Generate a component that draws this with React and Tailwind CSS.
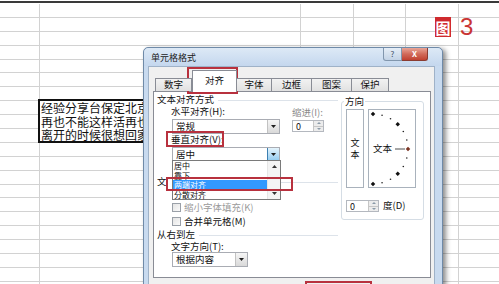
import React from "react"

const ROWS = Array.from({ length: 21 })

function ArrowBtn({ active }) {
  return (
    <div
      className={
        active
          ? "flex h-full w-[12px] items-center justify-center border-l border-[#3c7fb1] bg-gradient-to-b from-[#e5f4fc] to-[#8fcaf0]"
          : "flex h-full w-[12px] items-center justify-center border-l border-[#c2c2c2] bg-gradient-to-b from-[#f6f6f6] to-[#d9d9d9]"
      }
    >
      <svg width="5" height="3" viewBox="0 0 5 3">
        <path d="M0 0h5L2.5 3z" fill="#1e1e1e" />
      </svg>
    </div>
  )
}

function Select({ value, className, active }) {
  return (
    <div className={"flex h-[15px] items-center border border-[#a9acb3] bg-white " + className}>
      <span className="flex-1 pl-[3px] text-[9.5px] leading-none text-[#111]">{value}</span>
      <ArrowBtn active={active} />
    </div>
  )
}

function Spin({ className }) {
  return (
    <div className={"flex h-[12px] items-center border border-[#b4b8bf] bg-white " + className}>
      <span className="flex-1 pl-[3px] text-[9px] leading-none text-[#111]">0</span>
      <div className="flex h-full w-[10px] flex-col border-l border-[#c6c6c6] bg-[#ececec]">
        <div className="flex flex-1 items-center justify-center border-b border-[#c6c6c6]">
          <svg width="4" height="2" viewBox="0 0 4 2"><path d="M0 2h4L2 0z" fill="#8a9aa8" /></svg>
        </div>
        <div className="flex flex-1 items-center justify-center">
          <svg width="4" height="2" viewBox="0 0 4 2"><path d="M0 0h4L2 2z" fill="#8a9aa8" /></svg>
        </div>
      </div>
    </div>
  )
}

function Header({ text }) {
  return (
    <div className="flex h-[10px] items-center gap-[4px]">
      <span className="text-[9.5px] leading-none text-[#111]">{text}</span>
      <div className="h-px flex-1 bg-[#dde3ea]" />
    </div>
  )
}

function Check({ label, disabled }) {
  return (
    <div className="flex h-[11px] items-center gap-[3px] pl-[15px]">
      <div className="h-[9px] w-[9px] border border-[#9aa0a8] bg-gradient-to-br from-[#e4e4e4] to-[#fafafa]" />
      <span className={disabled ? "text-[9.5px] leading-none text-[#9a9a9a]" : "text-[9.5px] leading-none text-[#111]"}>
        {label}
      </span>
    </div>
  )
}

function Dial() {
  const dots = []
  for (let a = -90; a <= 90; a += 15) {
    const r = (a * Math.PI) / 180
    const x = 4 + 35 * Math.cos(r)
    const y = 39 + 35 * Math.sin(r)
    if (a % 45 === 0) {
      dots.push(
        <rect
          key={a}
          x={x - 1.6}
          y={y - 1.6}
          width="3.2"
          height="3.2"
          transform={`rotate(45 ${x} ${y})`}
          fill={a === 0 ? "#7a3322" : "#111"}
        />
      )
    } else {
      dots.push(<circle key={a} cx={x} cy={y} r="0.8" fill="#222" />)
    }
  }
  return (
    <div className="relative h-[79px] w-[48px] border border-[#a9b2bc] bg-white">
      <svg className="absolute left-0 top-0" width="48" height="79" viewBox="0 0 48 79">
        {dots}
        <line x1="26" y1="39" x2="36" y2="39" stroke="#222" strokeWidth="0.8" />
      </svg>
      <span className="absolute left-[4px] top-[34px] text-[9.5px] leading-none text-[#111]">文本</span>
    </div>
  )
}

export default function App() {
  return (
    <div className="relative h-[284px] w-[499px] overflow-hidden bg-white font-[family-name:'Noto_Sans_CJK_SC','Liberation_Sans',sans-serif]">
      {/* sheet grid */}
      <div className="h-[4px] pt-[1px]">
        <div className="h-[2px] bg-[#3a3a3a]" />
      </div>
      {ROWS.map((_, i) => (
        <div key={i} className="grid h-[13.9px] grid-cols-[40px_261px_53px_52px_53px_1fr]">
          <div className="border-b border-r border-[#d2d2d2]" />
          <div className="border-b border-r border-[#d2d2d2]" />
          <div className="border-b border-r border-[#d2d2d2]" />
          <div className="border-b border-r border-[#d2d2d2]" />
          <div className="border-b border-r border-[#d2d2d2]" />
          <div className="border-b border-[#d2d2d2]" />
        </div>
      ))}

      {/* label 图3 */}
      <div className="absolute left-[435px] top-[15px] flex items-center gap-[9px]">
        <div className="flex h-[20px] w-[16px] items-center justify-center bg-[#cf2a2e] text-[15px] font-bold leading-none text-white">
          图
        </div>
        <span className="font-['Liberation_Sans',sans-serif] text-[24px] leading-none text-[#c93434]">3</span>
      </div>

      {/* text box on the sheet */}
      <div className="absolute left-[38px] top-[99px] h-[44px] w-[120px] border-2 border-[#111] bg-white pl-[1px] text-[12px] leading-[13.5px] text-[#111]">
        <div>经验分享台保定北京</div>
        <div>再也不能这样活再也</div>
        <div>离开的时候很想回家</div>
      </div>

      {/* dialog */}
      <div className="absolute left-[143px] top-[47px] flex h-[245px] w-[300px] flex-col rounded-t-[5px] border border-[#6f8aa8] bg-[#c8daef] shadow-[3px_2px_5px_rgba(0,0,0,0.45)]">
        <div className="flex h-[18px] items-start rounded-t-[5px] bg-gradient-to-b from-[#dde9f6] to-[#c4d7ee]">
          <span className="ml-[7px] mt-[5px] text-[9px] leading-none text-[#1a1a1a]">单元格格式</span>
          <div className="ml-auto mr-[14px] flex">
            <div className="flex h-[13px] w-[19px] items-center justify-center rounded-bl-[3px] border border-t-0 border-[#8196ad] bg-gradient-to-b from-[#e6eef7] to-[#c3d3e6] text-[8px] leading-none text-[#3b4d63]">
              ?
            </div>
            <div className="flex h-[13px] w-[26px] items-center justify-center rounded-br-[3px] border border-l-0 border-t-0 border-[#8a3b31] bg-gradient-to-b from-[#e9a597] via-[#d16a5a] to-[#c04030] text-[8px] font-bold leading-none text-white">
              X
            </div>
          </div>
        </div>

        <div className="ml-[4px] mr-[7px] flex flex-1 flex-col border border-[#9fb2c8] bg-[#f0f0f0]">
          {/* tabs */}
          <div className="relative z-10 flex h-[24px] items-end pl-[6px] pt-[3px]">
            <div className="flex h-[13px] w-[37px] items-center justify-center border border-b-0 border-[#898c95] bg-gradient-to-b from-[#f2f2f2] to-[#e1e1e1] text-[9.5px] leading-none text-[#111]">数字</div>
            <div className="-mb-px flex h-[22px] w-[45px] items-start justify-center border border-b-0 border-[#898c95] bg-white pt-[5px] text-[9.5px] leading-none text-[#111]">对齐</div>
            <div className="flex h-[13px] w-[35px] items-center justify-center border border-b-0 border-l-0 border-[#898c95] bg-gradient-to-b from-[#f2f2f2] to-[#e1e1e1] text-[9.5px] leading-none text-[#111]">字体</div>
            <div className="flex h-[13px] w-[40px] items-center justify-center border border-b-0 border-l-0 border-[#898c95] bg-gradient-to-b from-[#f2f2f2] to-[#e1e1e1] text-[9.5px] leading-none text-[#111]">边框</div>
            <div className="flex h-[13px] w-[40px] items-center justify-center border border-b-0 border-l-0 border-[#898c95] bg-gradient-to-b from-[#f2f2f2] to-[#e1e1e1] text-[9.5px] leading-none text-[#111]">图案</div>
            <div className="flex h-[13px] w-[37px] items-center justify-center border border-b-0 border-l-0 border-[#898c95] bg-gradient-to-b from-[#f2f2f2] to-[#e1e1e1] text-[9.5px] leading-none text-[#111]">保护</div>
          </div>

          {/* panel */}
          <div className="ml-[4px] flex h-[187px] w-[278px] border border-[#898c95] bg-white">
            <div className="flex w-[184px] flex-col pl-[3px]">
              <div className="mt-[3px]">
                <Header text="文本对齐方式" />
              </div>
              <div className="flex pl-[14px]">
                <div className="flex flex-col">
                  <div className="mt-[2px] h-[10px] text-[9.5px] leading-none text-[#111]">水平对齐(H):</div>
                  <Select value="常规" className="ml-[1px] mt-[2px] w-[108px]" />
                </div>
                <div className="ml-[12px] flex flex-col">
                  <div className="mt-[3px] h-[10px] text-[9.5px] leading-none text-[#8a8a8a]">缩进(I):</div>
                  <Spin className="mt-[2px] w-[32px]" />
                </div>
              </div>
              <div className="mt-[1px] h-[10px] pl-[14px] text-[9.5px] leading-none text-[#111]">垂直对齐(V):</div>
              <Select value="居中" className="ml-[15px] mt-[2px] w-[108px]" active />
              <div className="mt-[15px] flex h-[10px] items-center">
                {/* the rest of this group label sits under the open list */}
                <span className="w-[11px] overflow-hidden whitespace-nowrap text-[9.5px] leading-none text-[#111]">文本控制</span>
                <div className="ml-[100px] h-px flex-1 bg-[#dde3ea]" />
              </div>
              <div className="mt-[15px]">
                <Check label="缩小字体填充(K)" disabled />
              </div>
              <div className="mt-[3px]">
                <Check label="合并单元格(M)" />
              </div>
              <div className="mt-[3px]">
                <Header text="从右到左" />
              </div>
              <div className="mt-[2px] h-[10px] pl-[14px] text-[9.5px] leading-none text-[#111]">文字方向(T):</div>
              <Select value="根据内容" className="ml-[15px] w-[76px]" />
            </div>

            <fieldset className="ml-[3px] mt-[4px] h-[124px] w-[83px] rounded-[3px] border border-[#d5dde5] px-[4px]">
              <legend className="ml-[-2px] px-[1px] text-[9.5px] leading-[10px] text-[#111]">方向</legend>
              <div className="mt-[3px] flex gap-[4px]">
                <div className="flex h-[79px] w-[18px] flex-col items-center justify-center gap-[1px] border border-[#a9b2bc] bg-white text-[9px] leading-[11px] text-[#111]">
                  <span>文</span>
                  <span>本</span>
                </div>
                <Dial />
              </div>
              <div className="mt-[12px] flex items-center gap-[4px]">
                <Spin className="w-[33px]" />
                <span className="text-[9.5px] leading-none text-[#111]">度(D)</span>
              </div>
            </fieldset>
          </div>
        </div>
      </div>

      {/* open dropdown list */}
      <div className="absolute left-[172px] top-[160px] flex h-[40px] w-[109px] border border-[#7a7a7a] bg-white">
        <div className="flex flex-1 flex-col text-[8px] text-[#111]">
          <div className="h-[9.5px] pl-[1px] leading-[9.5px]">居中</div>
          <div className="h-[9.5px] pl-[1px] leading-[9.5px]">靠下</div>
          <div className="h-[9.5px] bg-[#3399ff] pl-[1px] leading-[9.5px] text-white">两端对齐</div>
          <div className="h-[9.5px] pl-[1px] leading-[9.5px]">分散对齐</div>
        </div>
        <div className="flex w-[13px] flex-col items-center justify-between border-l border-[#e6e6e6] bg-[#f4f4f4] py-[4px]">
          <svg width="5" height="3" viewBox="0 0 5 3"><path d="M0 3h5L2.5 0z" fill="#333" /></svg>
          <svg width="5" height="3" viewBox="0 0 5 3"><path d="M0 0h5L2.5 3z" fill="#333" /></svg>
        </div>
      </div>

      {/* red marks */}
      <div className="absolute left-[187px] top-[67px] h-[27px] w-[51px] border-2 border-[#b8313e]" />
      <div className="absolute left-[166px] top-[131px] h-[16px] w-[58px] border-2 border-[#b8313e]" />
      <div className="absolute left-[166px] top-[177px] h-[14px] w-[127px] border-2 border-[#b8313e]" />
      <div className="absolute left-[305px] top-[281px] h-[12px] w-[67px] border-2 border-[#b8313e]" />
    </div>
  )
}
